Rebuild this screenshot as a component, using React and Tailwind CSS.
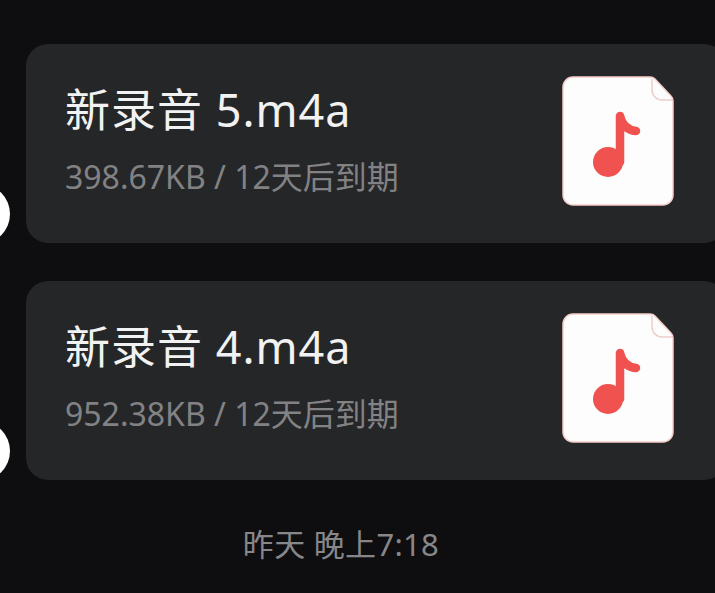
import React from 'react';

const AudioFileIcon = () => (
  <svg width="112" height="130" viewBox="0 0 112 130" className="shrink-0">
    {/* page with folded corner */}
    <path
      d="M11 1H88Q91 1 93 3L109 20Q111 22 111 25V119A10 10 0 0 1 101 129H11A10 10 0 0 1 1 119V11A10 10 0 0 1 11 1Z"
      fill="#fdfdfd"
      stroke="#f6cdc9"
      strokeWidth="1.5"
    />
    <path
      d="M90 3V14A10 10 0 0 0 100 24H110"
      fill="none"
      stroke="#ebcdca"
      strokeWidth="1.5"
    />
    {/* note */}
    <circle cx="46" cy="86" r="15" fill="#f0524f" />
    <path
      d="M58 86V40C60 49 65 54 74 55"
      fill="none"
      stroke="#f0524f"
      strokeWidth="8.500"
      strokeLinecap="round"
      strokeLinejoin="round"
    />
  </svg>
);

const recordings = [
  { name: '新录音 5.m4a', meta: '398.67KB / 12天后到期' },
  { name: '新录音 4.m4a', meta: '952.38KB / 12天后到期' },
];

export default function App() {
  return (
    <div
      className="h-[593px] w-[715px] overflow-hidden bg-[#0e0e10] pt-[44px] pl-[26px]"
      style={{ fontFamily: '"Noto Sans", "Noto Sans CJK SC", sans-serif' }}
    >
      <div className="flex flex-col gap-[38px]">
        {recordings.map((item) => (
          <div key={item.name} className="relative">
            {/* avatar peeking in from the left edge */}
            <div className="absolute left-[-76px] top-[140px] h-[60px] w-[60px] rounded-full bg-white" />
            <div className="flex h-[199px] w-[700px] items-start justify-between rounded-[22px] bg-[#252628] pl-[39px] pr-[52px] pt-[32px]">
              <div className="pt-px">
                <p className="text-[45px] leading-[66px] tracking-[1px] text-[#f2f2f3] whitespace-nowrap">{item.name}</p>
                <p className="mt-[15px] text-[32px] leading-[38px] text-[#828284] whitespace-nowrap">{item.meta}</p>
              </div>
              <AudioFileIcon />
            </div>
          </div>
        ))}
      </div>
      <p className="mt-[44px] pr-[59px] text-center text-[31px] leading-[40px] tracking-[0.3px] text-[#87878a]">昨天 晚上7:18</p>
    </div>
  );
}
